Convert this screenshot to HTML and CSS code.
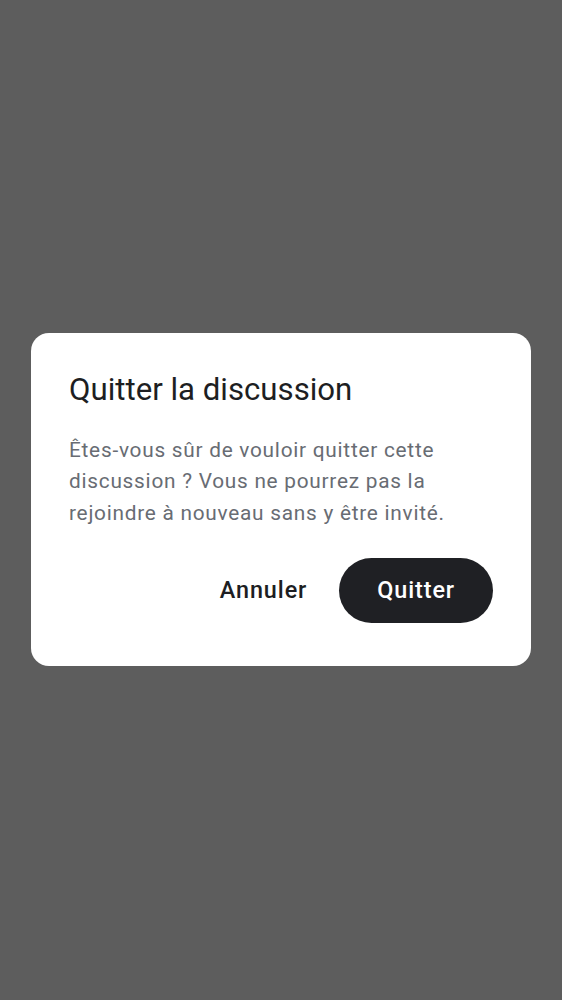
FILE: index.html
```html
<!DOCTYPE html>
<html lang="fr">
<head>
<meta charset="utf-8">
<link rel="stylesheet" href="styles.css">
</head>
<body>
<div class="scrim">
  <div class="dialog" role="dialog">
    <h2 class="title">Quitter la discussion</h2>
    <p class="body">Êtes-vous sûr de vouloir quitter cette discussion ? Vous ne pourrez pas la rejoindre à nouveau sans y être invité.</p>
    <div class="actions">
      <button class="btn btn-text">Annuler</button>
      <button class="btn btn-filled">Quitter</button>
    </div>
  </div>
</div>
</body>
</html>
```

FILE: styles.css
```css
html, body {
  margin: 0;
  padding: 0;
  height: 100%;
}
body {
  font-family: Roboto, "Noto Sans", sans-serif;
  background: #5d5d5d;
}
.scrim {
  height: 1000px;
  display: flex;
  flex-direction: column;
  align-items: center;
  background: #5d5d5d;
}
.dialog {
  margin-top: 333px;
  width: 500px;
  box-sizing: border-box;
  background: #ffffff;
  border-radius: 18px;
  padding: 36px 38px 43px 38px;
}
.title {
  margin: 0;
  font-size: 31.2px;
  font-weight: 400;
  color: #1d1e22;
  line-height: 41.6px;
}
.body {
  margin: 24.7px 0 0 0;
  font-size: 20.8px;
  line-height: 31.2px;
  color: #686c73;
  letter-spacing: 0.75px;
}
.actions {
  margin-top: 29px;
  display: flex;
  justify-content: flex-end;
  align-items: center;
  gap: 8px;
}
.btn {
  font-family: Roboto, "Noto Sans", sans-serif;
  font-size: 23.4px;
  font-weight: 500;
  border: none;
  height: 65px;
  border-radius: 33px;
  padding: 0 38px;
  cursor: pointer;
  letter-spacing: 0.9px;
}
.btn-text {
  background: transparent;
  color: #1d1e22;
  padding: 0 24px;
}
.btn-filled {
  background: #1f2024;
  color: #ffffff;
}
```
